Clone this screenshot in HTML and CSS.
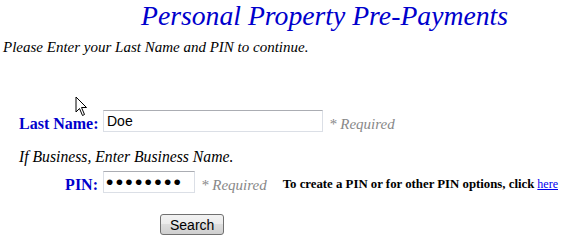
FILE: index.html
```html
<!DOCTYPE html>
<html lang="en">
<head>
    <meta charset="UTF-8">
    <title>Personal Property Pre-Payments</title>
    <link rel="stylesheet" href="styles.css">
</head>
<body>

<h1 class="titulo">Personal Property Pre-Payments</h1>
<p class="intro">Please Enter your Last Name and PIN to continue.</p>

<form class="formulario" onsubmit="return false;">
    <div class="fila fila-nombre">
        <label class="etiqueta" for="apellido">Last Name:</label>
        <div class="campo">
            <input type="text" id="apellido" class="caja caja-larga" value="Doe">
            <span class="requerido">* Required</span>
        </div>
    </div>

    <div class="nota">If Business, Enter Business Name.</div>

    <div class="fila fila-pin">
        <label class="etiqueta" for="pin">PIN:</label>
        <div class="campo">
            <input type="password" id="pin" class="caja caja-corta" value="12345678">
            <span class="requerido">* Required</span>
            <span class="opciones">To create a PIN or for other PIN options, click</span>
            <a href="#" class="enlace">here</a>
        </div>
    </div>

    <div class="fila-boton">
        <button type="submit" class="boton">Search</button>
    </div>
</form>

<!-- puntero del raton que sale en la captura -->
<svg class="puntero" width="14" height="22" viewBox="0 0 14 22">
    <path d="M1 1 L1 16 L4.5 12.5 L7.5 19.5 L9.5 18.5 L6.5 11.5 L11.5 11.5 Z" fill="#fff" stroke="#000" stroke-width="1" stroke-linejoin="miter"/>
</svg>

</body>
</html>
```

FILE: styles.css
```css
body {
    font-family: "Liberation Serif", "Times New Roman", serif;
    background-color: #fff;
    color: #000;
    margin: 0;
    padding: 0 3px;
    position: relative;
    white-space: nowrap;
}

.titulo {
    margin: 0;
    padding: 0 0 0 138px;
    font-size: 27.7px;
    font-style: italic;
    font-weight: normal;
    color: #0000cc;
    line-height: 31px;
}

.intro {
    margin: 7px 0 0;
    font-size: 15px;
    font-style: italic;
    line-height: 18px;
}

.formulario {
    margin-top: 54px;
    padding-left: 16px;
}

.fila {
    display: flex;
    align-items: flex-end;
}

.etiqueta {
    flex: none;
    width: 79px;
    margin-right: 5px;
    text-align: right;
    font-weight: bold;
    font-size: 16px;
    line-height: 16px;
    color: #0000cc;
}

.campo {
    display: flex;
    align-items: flex-end;
}

.caja {
    flex: none;
    height: 22px;
    box-sizing: border-box;
    border: 1px solid #dbdfe6;
    border-top-color: #abadb3;
    padding: 1px 3px;
    font-family: Arial, "Liberation Sans", sans-serif;
    font-size: 14px;
    margin: 0;
}

.caja-larga {
    width: 220px;
}

.caja-corta {
    width: 92px;
    padding: 0 2px;
    font-size: 21px;
    line-height: 20px;
    letter-spacing: 2.3px;
}

.requerido {
    margin-left: 6px;
    color: #888;
    font-style: italic;
    font-size: 15px;
    line-height: 16px;
}

.opciones {
    margin-left: 16px;
    font-weight: bold;
    font-size: 12.8px;
    line-height: 18px;
}

.enlace {
    margin-left: 3px;
    font-size: 12px;
    line-height: 18px;
    color: #0000ee;
}

.nota {
    margin: 16px 0 0;
    font-style: italic;
    font-size: 15.7px;
    line-height: 18px;
}

.fila-pin {
    margin-top: 5px;
}

.fila-boton {
    margin: 21px 0 0 141px;
}

.boton {
    font-family: Arial, "Liberation Sans", sans-serif;
    font-size: 14px;
    padding: 1px 9px;
    height: 21px;
    border: 1px solid #707070;
    border-radius: 3px;
    background: linear-gradient(#f2f2f2, #ebebeb 50%, #dddddd 50%, #cfcfcf);
    color: #000;
}

.puntero {
    position: absolute;
    left: 75px;
    top: 96px;
}
```
